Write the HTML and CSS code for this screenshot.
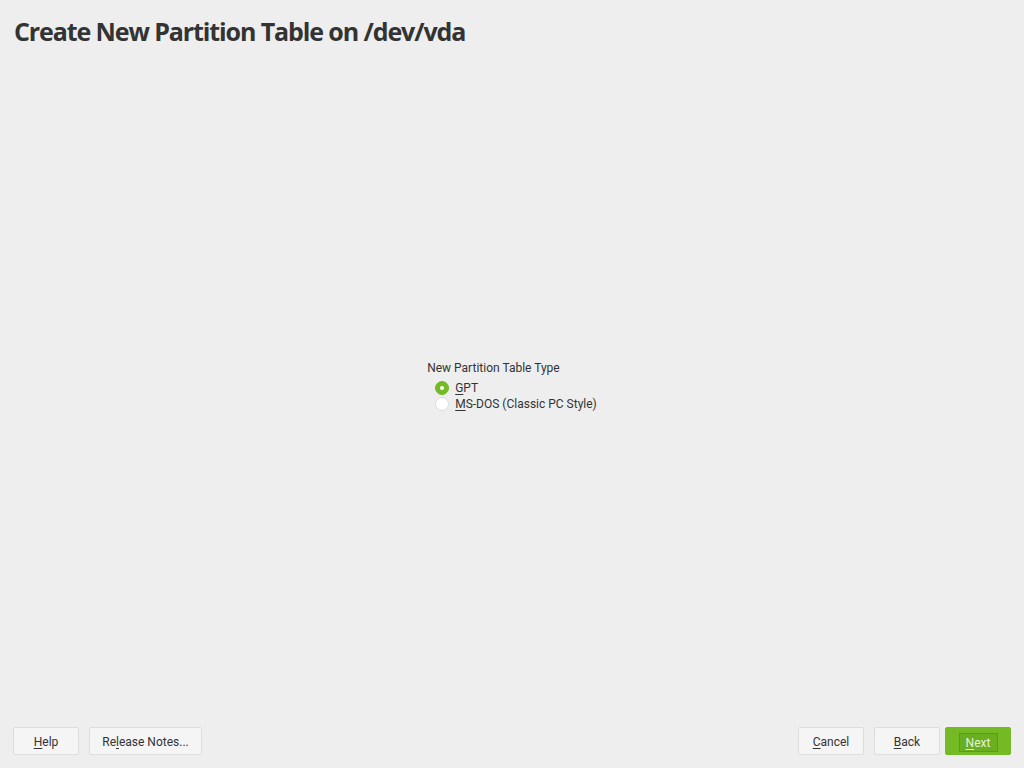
FILE: index.html
```html
<!DOCTYPE html>
<html>
<head>
<meta charset="utf-8">
<link rel="stylesheet" href="styles.css">
</head>
<body>
<div class="page">
  <h1 class="title">Create New Partition Table on /dev/vda</h1>
  <main class="content">
    <div class="group">
      <div class="group-label">New Partition Table Type</div>
      <label class="radio checked"><span class="dot"></span><span><u>G</u>PT</span></label>
      <label class="radio"><span class="dot"></span><span><u>M</u>S-DOS (Classic PC Style)</span></label>
    </div>
  </main>
  <footer class="footer">
    <div class="left">
      <button class="btn w65"><u>H</u>elp</button>
      <button class="btn wide">Re<u>l</u>ease Notes...</button>
    </div>
    <div class="right">
      <button class="btn w65 cancel"><u>C</u>ancel</button>
      <button class="btn w65"><u>B</u>ack</button>
      <button class="btn w65 primary"><span class="focus"><u>N</u>ext</span></button>
    </div>
  </footer>
</div>
</body>
</html>
```

FILE: styles.css
```css
html, body {
  margin: 0;
  padding: 0;
  background: #eeeeee;
}
.page {
  width: 1024px;
  height: 768px;
  display: flex;
  flex-direction: column;
  font-family: Roboto, "Liberation Sans", sans-serif;
  font-size: 12px;
  color: #333333;
}
.title {
  margin: 0;
  padding: 14px 0 0 14px;
  font-family: "Open Sans", sans-serif;
  font-weight: 700;
  font-size: 25px;
  line-height: 34px;
  color: #333333;
  letter-spacing: -1.1px;
}
.content {
  flex: 1;
  display: flex;
  align-items: center;
  justify-content: center;
}
.group {
  display: flex;
  flex-direction: column;
  margin-top: -4px;
}
.group-label {
  line-height: 16px;
  margin-bottom: 4px;
}
.radio {
  display: flex;
  align-items: center;
  line-height: 16px;
  padding-left: 8px;
}
.radio u, .btn u {
  text-underline-offset: 2px;
}
.dot {
  width: 12px;
  height: 12px;
  border-radius: 50%;
  background: #ffffff;
  border: 1px solid #dddddd;
  margin-right: 6px;
  box-sizing: content-box;
  position: relative;
}
.radio.checked .dot {
  background: #73ba25;
  border-color: #73ba25;
}
.radio.checked .dot::after {
  content: "";
  position: absolute;
  left: 4px;
  top: 4px;
  width: 4px;
  height: 4px;
  border-radius: 50%;
  background: #ffffff;
}
.footer {
  display: flex;
  justify-content: space-between;
  padding: 0 13px 13px 13px;
}
.left, .right {
  display: flex;
  gap: 10px;
}
.right {
  gap: 5px;
}
.btn {
  height: 28px;
  padding: 2px 12px 0;
  font-family: Roboto, "Liberation Sans", sans-serif;
  font-size: 12px;
  color: #333333;
  background: #f5f5f5;
  border: 1px solid #dddddd;
  border-radius: 2px;
  box-sizing: border-box;
}
.btn.wide {
  width: 113px;
  padding: 2px 0 0;
}
.btn.w65 {
  width: 66px;
  padding: 2px 0 0;
}
.btn.cancel {
  margin-right: 5px;
}
.btn.primary {
  background: #73ba25;
  border-color: #73ba25;
  color: #e8f4d8;
  display: flex;
  align-items: center;
  justify-content: center;
}
.focus {
  display: inline-block;
  width: 39px;
  height: 19px;
  line-height: 19px;
  border: 1px solid #5a9a1d;
  background: #6aae22;
  box-sizing: border-box;
  text-align: center;
}
```
